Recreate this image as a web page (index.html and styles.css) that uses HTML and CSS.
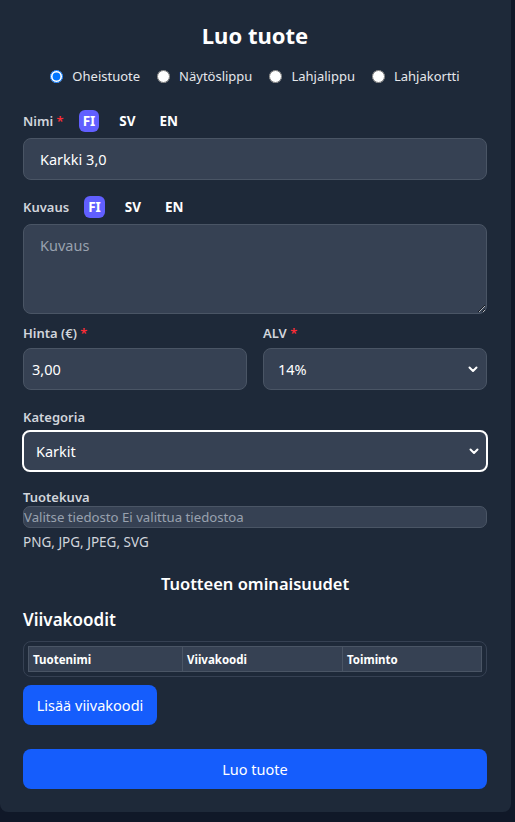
FILE: index.html
```html
<!DOCTYPE html>
<html lang="fi">
<head>
<meta charset="utf-8">
<title>Luo tuote</title>
<link rel="stylesheet" href="styles.css">
</head>
<body>
<div class="card">
  <h1 class="title">Luo tuote</h1>
  <div class="radios">
    <label class="radio"><input type="radio" name="type" checked><span>Oheistuote</span></label>
    <label class="radio"><input type="radio" name="type"><span>Näytöslippu</span></label>
    <label class="radio"><input type="radio" name="type"><span>Lahjalippu</span></label>
    <label class="radio"><input type="radio" name="type"><span>Lahjakortti</span></label>
  </div>

  <div class="field f-name">
    <div class="label-row">
      <span class="label">Nimi <span class="req">*</span></span>
      <div class="langs">
        <span class="lang active">FI</span>
        <span class="lang">SV</span>
        <span class="lang">EN</span>
      </div>
    </div>
    <input class="input" type="text" value="Karkki 3,0">
  </div>

  <div class="field f-desc">
    <div class="label-row">
      <span class="label">Kuvaus</span>
      <div class="langs">
        <span class="lang active">FI</span>
        <span class="lang">SV</span>
        <span class="lang">EN</span>
      </div>
    </div>
    <textarea class="textarea" placeholder="Kuvaus"></textarea>
  </div>

  <div class="row2">
    <div class="field">
      <span class="label block">Hinta (€) <span class="req">*</span></span>
      <input class="input small-pad" type="text" value="3,00">
    </div>
    <div class="field">
      <span class="label block">ALV <span class="req">*</span></span>
      <div class="select-wrap">
        <select class="select"><option>14%</option></select>
        <svg class="chev" width="12" height="12" viewBox="0 0 12 12"><path d="M2.5 4.5 L6 8 L9.5 4.5" fill="none" stroke="#fff" stroke-width="2" stroke-linecap="round" stroke-linejoin="round"/></svg>
      </div>
    </div>
  </div>

  <div class="field f-cat">
    <span class="label block">Kategoria</span>
    <div class="select-wrap">
      <select class="select focused"><option>Karkit</option></select>
      <svg class="chev" width="12" height="12" viewBox="0 0 12 12"><path d="M2.5 4.5 L6 8 L9.5 4.5" fill="none" stroke="#fff" stroke-width="2" stroke-linecap="round" stroke-linejoin="round"/></svg>
    </div>
  </div>

  <div class="field f-img">
    <span class="label block tight">Tuotekuva</span>
    <div class="file"><span>Valitse tiedosto</span> <span>Ei valittua tiedostoa</span></div>
    <p class="hint">PNG, JPG, JPEG, SVG</p>
  </div>

  <h2 class="subtitle">Tuotteen ominaisuudet</h2>
  <h3 class="section">Viivakoodit</h3>
  <div class="table-wrap">
    <table class="table">
      <thead>
        <tr><th class="c1">Tuotenimi</th><th class="c2">Viivakoodi</th><th class="c3">Toiminto</th></tr>
      </thead>
    </table>
  </div>
  <button class="btn btn-add" type="button">Lisää viivakoodi</button>
  <button class="btn btn-submit" type="button">Luo tuote</button>
</div>
</body>
</html>
```

FILE: styles.css
```css
html, body {
  margin: 0;
  padding: 0;
  background: #101828;
}
body {
  font-family: "Noto Sans", "Open Sans", sans-serif;
  color: #fff;
  width: 515px;
  height: 822px;
  overflow: hidden;
}
.card {
  width: 511px;
  box-sizing: border-box;
  background: #1e2939;
  border-radius: 0 0 8px 8px;
  padding: 19px 24px 23px 23px;
}
.title {
  margin: 0;
  font-size: 22px;
  line-height: 32px;
  font-weight: 700;
  text-align: center;
}
.radios {
  margin-top: 15px;
  height: 20px;
  display: flex;
  justify-content: center;
  align-items: center;
  gap: 17px;
  font-size: 13px;
  color: #e5e7eb;
}
.radio {
  display: flex;
  align-items: center;
  gap: 9px;
}
.radio input {
  margin: 0;
  width: 13px;
  height: 13px;
}
.field {
  display: flex;
  flex-direction: column;
}
.label-row {
  display: flex;
  align-items: center;
  height: 22px;
  gap: 15px;
  margin-bottom: 6px;
}
.f-name { margin-top: 24px; }
.f-desc { margin-top: 16px; }
.label {
  font-size: 13px;
  font-weight: 600;
  color: #d1d5dc;
  line-height: 18px;
}
.label.block {
  display: block;
  margin-bottom: 6px;
}
.label.tight { margin-bottom: 0; }
.req { color: #fb2c36; }
.langs {
  display: flex;
  gap: 16px;
}
.lang {
  font-size: 13.5px;
  font-weight: 700;
  line-height: 22px;
  padding: 0 4px;
  border-radius: 6px;
  color: #fff;
}
.lang.active {
  background: #615fff;
}
.input, .textarea, .select {
  box-sizing: border-box;
  width: 100%;
  background: #364153;
  border: 1px solid #4a5565;
  border-radius: 8px;
  color: #fff;
  font-family: inherit;
  font-size: 14.5px;
  margin: 0;
  outline: none;
}
.input {
  height: 42px;
  padding: 0 16px;
}
.input.small-pad { padding: 0 8px; }
.textarea {
  height: 90px;
  padding: 10px 16px;
  resize: vertical;
  display: block;
}
.textarea::placeholder { color: #99a1af; }
.row2 {
  margin-top: 10px;
  display: grid;
  grid-template-columns: 1fr 1fr;
  gap: 16px;
}
.select-wrap {
  position: relative;
}
.select {
  appearance: none;
  -webkit-appearance: none;
  height: 42px;
  padding: 0 14px;
  display: block;
}
.select.focused {
  border: 2px solid #fff;
  height: 42px;
  padding: 0 12px;
}
.chev {
  position: absolute;
  right: 8px;
  top: 15px;
  pointer-events: none;
}
.f-cat { margin-top: 18px; }
.f-cat .label.block { margin-bottom: 4px; }
.f-cat .select-wrap { margin: 0 -1px; }
.f-img { margin-top: 16px; }
.file {
  box-sizing: border-box;
  height: 22px;
  border: 1px solid #4a5565;
  background: #364153;
  border-radius: 7px;
  font-size: 13.2px;
  line-height: 20px;
  color: #99a1af;
  padding: 0;
}
.hint {
  margin: 4px 0 0;
  font-size: 13.5px;
  line-height: 20px;
  color: #d1d5dc;
}
.subtitle {
  margin: 20px 0 0;
  font-size: 16.5px;
  line-height: 24px;
  font-weight: 600;
  text-align: center;
}
.section {
  margin: 11px 0 0;
  font-size: 17px;
  line-height: 26px;
  font-weight: 600;
}
.table-wrap {
  margin-top: 8px;
  border: 1px solid #364153;
  border-radius: 8px;
  padding: 4px;
}
.table {
  width: 100%;
  border-collapse: collapse;
  background: #364153;
}
.table th {
  border: 1px solid #4a5565;
  text-align: left;
  font-size: 11.5px;
  font-weight: 700;
  height: 24px;
  padding: 0 4px;
  color: #fff;
}
.c1 { width: 145px; }
.c2 { width: 151px; }
.btn {
  display: block;
  border: none;
  background: #155dfc;
  color: #fff;
  font-family: inherit;
  font-size: 14.5px;
  border-radius: 8px;
  height: 40px;
  cursor: pointer;
  white-space: nowrap;
}
.btn-add {
  margin-top: 8px;
  padding: 0;
  width: 134px;
}
.btn-submit {
  margin-top: 24px;
  width: 100%;
}
```
